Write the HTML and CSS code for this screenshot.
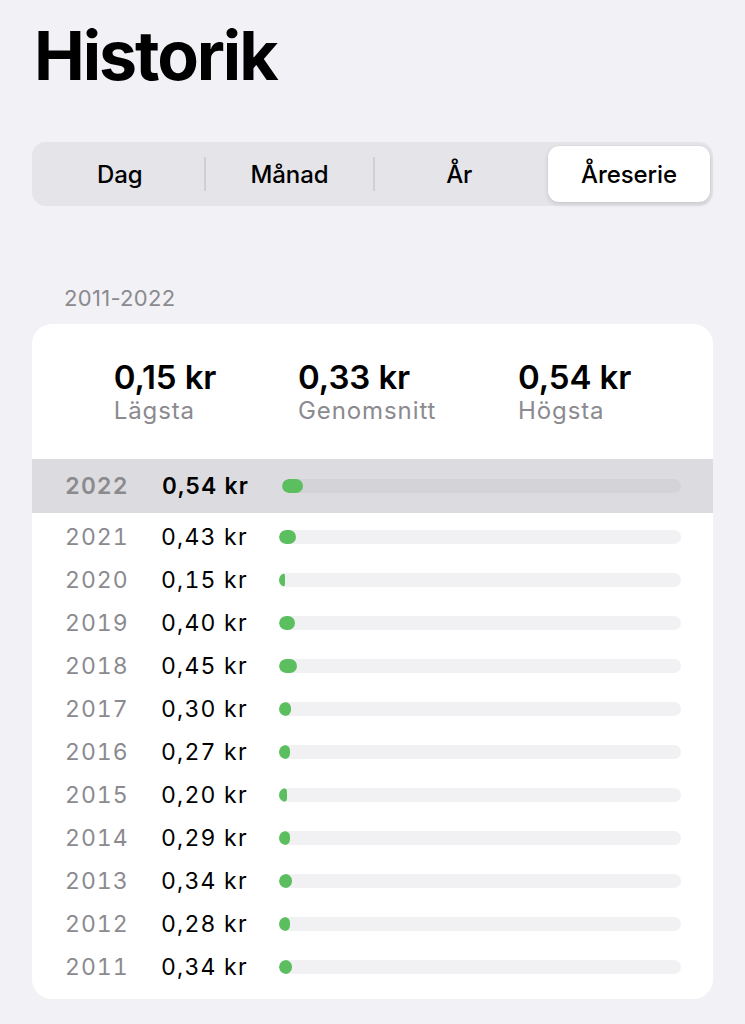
FILE: index.html
```html
<!DOCTYPE html>
<html lang="sv">
<head>
<meta charset="utf-8">
<title>Historik</title>
<link rel="stylesheet" href="styles.css">
</head>
<body>
<main class="page">
  <h1 class="title">Historik</h1>

  <div class="segmented">
    <div class="seg">Dag</div>
    <div class="divider"></div>
    <div class="seg">Månad</div>
    <div class="divider"></div>
    <div class="seg">År</div>
    <div class="divider hidden"></div>
    <div class="seg active">Åreserie</div>
  </div>

  <div class="section-label">2011-2022</div>

  <section class="card">
    <div class="stats">
      <div class="stat"><div class="stat-value">0,15 kr</div><div class="stat-label">Lägsta</div></div>
      <div class="stat"><div class="stat-value">0,33 kr</div><div class="stat-label">Genomsnitt</div></div>
      <div class="stat"><div class="stat-value">0,54 kr</div><div class="stat-label">Högsta</div></div>
    </div>

    <div class="row selected">
      <span class="year">2022</span><span class="value">0,54 kr</span>
      <div class="track"><div class="fill" style="width:21px"></div></div>
    </div>
    <div class="rows">
      <div class="row"><span class="year">2021</span><span class="value">0,43 kr</span><div class="track"><div class="fill" style="width:17px"></div></div></div>
      <div class="row"><span class="year">2020</span><span class="value">0,15 kr</span><div class="track"><div class="fill" style="width:6px"></div></div></div>
      <div class="row"><span class="year">2019</span><span class="value">0,40 kr</span><div class="track"><div class="fill" style="width:16px"></div></div></div>
      <div class="row"><span class="year">2018</span><span class="value">0,45 kr</span><div class="track"><div class="fill" style="width:18px"></div></div></div>
      <div class="row"><span class="year">2017</span><span class="value">0,30 kr</span><div class="track"><div class="fill" style="width:12px"></div></div></div>
      <div class="row"><span class="year">2016</span><span class="value">0,27 kr</span><div class="track"><div class="fill" style="width:11px"></div></div></div>
      <div class="row"><span class="year">2015</span><span class="value">0,20 kr</span><div class="track"><div class="fill" style="width:8px"></div></div></div>
      <div class="row"><span class="year">2014</span><span class="value">0,29 kr</span><div class="track"><div class="fill" style="width:11px"></div></div></div>
      <div class="row"><span class="year">2013</span><span class="value">0,34 kr</span><div class="track"><div class="fill" style="width:13px"></div></div></div>
      <div class="row"><span class="year">2012</span><span class="value">0,28 kr</span><div class="track"><div class="fill" style="width:11px"></div></div></div>
      <div class="row"><span class="year">2011</span><span class="value">0,34 kr</span><div class="track"><div class="fill" style="width:13px"></div></div></div>
    </div>
  </section>
</main>
</body>
</html>
```

FILE: styles.css
```css
* { box-sizing: border-box; }

html, body {
  margin: 0;
  padding: 0;
  background: #f2f1f6;
  font-family: Inter, "Noto Sans", "Liberation Sans", sans-serif;
  color: #000;
}

.page {
  padding: 21px 32px 0 32px;
}

.title {
  margin: 0;
  font-size: 68px;
  line-height: 68px;
  font-weight: 700;
  letter-spacing: -2.1px;
  padding-left: 2px;
}

.segmented {
  margin-top: 53px;
  height: 64px;
  background: #e4e4e9;
  border-radius: 14px;
  padding: 4px 3px;
  display: flex;
  align-items: center;
}

.seg {
  flex: 1 1 0;
  height: 56px;
  display: flex;
  align-items: center;
  justify-content: center;
  font-size: 24px;
  font-weight: 500;
  letter-spacing: -0.1px;
  border-radius: 11px;
}

.seg.active {
  flex: 0 0 162px;
  margin-left: 4px;
  background: #fff;
  box-shadow: 0 2px 5px rgba(0, 0, 0, 0.12), 0 0 0 0.5px rgba(0, 0, 0, 0.04);
}

.divider {
  width: 0;
  margin: 0 -1px;
  height: 34px;
  border-left: 2px solid #cfcfd4;
}

.divider.hidden { border-left-color: transparent; }

.section-label {
  margin-top: 79px;
  padding-left: 32px;
  font-size: 22px;
  line-height: 26px;
  color: #8b8a8f;
  letter-spacing: 0.3px;
}

.card {
  margin-top: 13px;
  background: #fff;
  border-radius: 20px;
  overflow: hidden;
  padding-bottom: 11px;
}

.stats {
  display: flex;
  justify-content: space-evenly;
  padding: 34px 0 34px;
}

.stat-value {
  font-size: 33px;
  line-height: 38px;
  font-weight: 600;
  letter-spacing: -0.1px;
}

.stat-label {
  margin-top: 1px;
  font-size: 24px;
  line-height: 28px;
  color: #8b8a8f;
  letter-spacing: 0.9px;
}

.rows {
  padding-top: 2px;
}

.row {
  height: 43px;
  display: flex;
  align-items: center;
  padding: 0 32px 0 33px;
}

.row.selected {
  height: 54px;
  background: #dcdce0;
}

.year {
  width: 96px;
  flex: none;
  font-size: 23px;
  color: #8b8a8f;
  font-variant-numeric: tabular-nums;
  letter-spacing: 1px;
}

.value {
  width: 118px;
  flex: none;
  font-size: 23px;
  color: #000;
  font-variant-numeric: tabular-nums;
  letter-spacing: 1.2px;
}

.selected .year,
.selected .value {
  font-weight: 600;
}

.selected .year { width: 97px; }
.selected .value { width: 120px; letter-spacing: 1.1px; }

.track {
  flex: 1;
  height: 14px;
  background: #f1f1f3;
  border-radius: 7px;
  overflow: hidden;
}

.selected .track {
  background: #d3d3d8;
}

.fill {
  height: 100%;
  background: #5bbf5f;
  border-radius: 7px;
}
```
